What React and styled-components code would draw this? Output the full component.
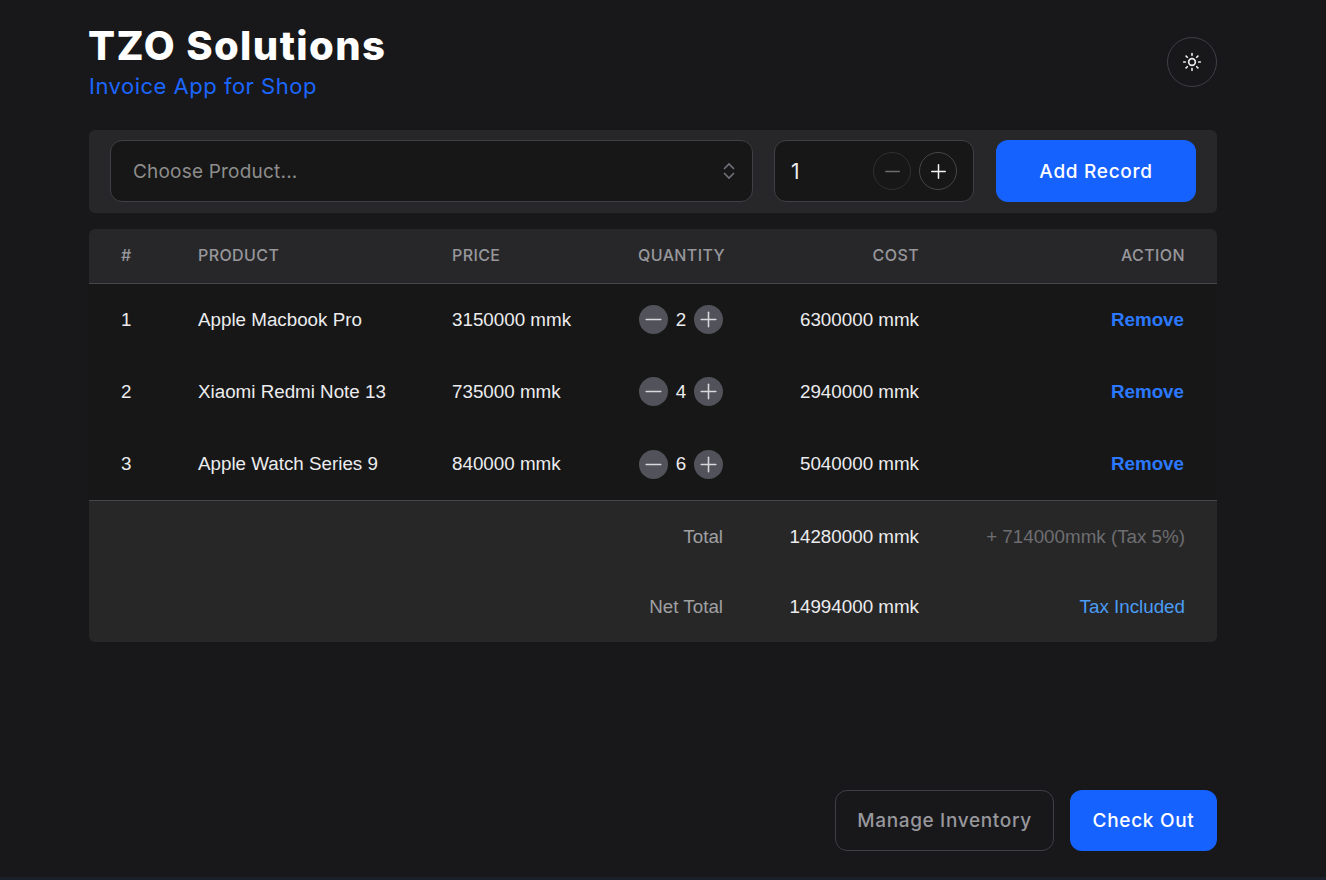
import React from "react";
import styled, { createGlobalStyle } from "styled-components";
import { Minus, Plus, Sun } from "lucide-react";

const GlobalStyle = createGlobalStyle`
  html {
    min-height: 100%;
    background: linear-gradient(to top, #1a212b 3px, #18181b 3px);
  }
  body {
    margin: 0;
    font-family: "Liberation Sans", Arial, sans-serif;
    color: #ececee;
  }
`;

const brandFont = `Inter, "Noto Sans", sans-serif`;

const Page = styled.div`
  width: 1128px;
  margin-left: 89px;
  padding-top: 24px;
`;

const Header = styled.header`
  display: flex;
  justify-content: space-between;
  align-items: center;
  height: 76px;
`;

const Title = styled.h1`
  margin: 0 0 0 -1px;
  font: 800 40px/44px ${brandFont};
  letter-spacing: 1.4px;
  color: #fff;
`;

const Subtitle = styled.p`
  margin: 4px 0 0;
  font: 400 22px/28px ${brandFont};
  letter-spacing: 0.5px;
  color: #1b66ff;
`;

const ThemeButton = styled.button`
  width: 50px;
  height: 50px;
  padding: 0;
  display: grid;
  place-items: center;
  border-radius: 50%;
  border: 1px solid #3f3f46;
  background: transparent;
  color: #ececee;
`;

const Toolbar = styled.section`
  margin-top: 30px;
  height: 83px;
  box-sizing: border-box;
  padding: 10px 21px;
  display: flex;
  gap: 21px;
  background: #27272a;
  border-radius: 6px;
`;

const Field = styled.div`
  box-sizing: border-box;
  height: 62px;
  display: flex;
  align-items: center;
  background: #171717;
  border: 1px solid #3f3f46;
  border-radius: 12px;
`;

const ProductSelect = styled(Field)`
  width: 643px;
  padding: 0 15px 0 22px;
  justify-content: space-between;
  font: 400 19px ${brandFont};
  letter-spacing: 0.2px;
  color: #8d8d8d;
`;

const QuantityField = styled(Field)`
  width: 200px;
  padding: 0 16px 0 16px;
  gap: 8px;
  font: 400 21px ${brandFont};
  color: #ececee;
`;

const QuantityValue = styled.span`
  flex: 1;
`;

const RoundButton = styled.button`
  width: 38px;
  height: 38px;
  padding: 0;
  display: grid;
  place-items: center;
  border-radius: 50%;
  background: transparent;
  border: 1px solid ${(p) => (p.$muted ? "#2f2f33" : "#46464c")};
  color: ${(p) => (p.$muted ? "#6c6c70" : "#f2f2f2")};
`;

const PrimaryButton = styled.button`
  box-sizing: border-box;
  height: ${(p) => p.$height || 62}px;
  width: ${(p) => p.$width}px;
  margin-left: ${(p) => (p.$push ? "auto" : "0")};
  border: none;
  border-radius: 12px;
  background: #1662ff;
  color: #fff;
  font: 500 19px ${brandFont};
  letter-spacing: 0.7px;
`;

const Table = styled.section`
  margin-top: 16px;
  border-radius: 6px;
  overflow: hidden;
  background: #171717;
`;

const Row = styled.div`
  display: grid;
  grid-template-columns: 77px 254px 186px 85px 196px 266px;
  align-items: center;
  padding: 0 32px;
  height: ${(p) => p.$height}px;
`;

const HeadRow = styled(Row)`
  background: #27272a;
  border-bottom: 1px solid #46464c;
  box-sizing: border-box;
  padding-bottom: 1px;
  font-family: ${brandFont};
  font-weight: 500;
  letter-spacing: 0.4px;
  color: #97979b;
`;

const Cell = styled.div`
  text-align: ${(p) => p.$align || "left"};
  font-size: ${(p) => (p.$head ? "16px" : "18.8px")};
  white-space: nowrap;
`;

const RemoveLink = styled.a`
  margin-right: 1px;
  font-weight: 700;
  color: #2b79ff;
`;

const Stepper = styled.div`
  display: flex;
  align-items: center;
  justify-content: space-between;
  padding-left: 1px;
`;

const StepButton = styled.button`
  width: 29px;
  height: 29px;
  padding: 0;
  display: grid;
  place-items: center;
  border: none;
  border-radius: 50%;
  background: #52525b;
  color: #d8d8da;
`;

const Footer = styled.div`
  background: #272727;
  border-top: 1px solid #46464c;
  padding-top: 1px;
`;

const Label = styled(Cell)`
  grid-column: 4;
  text-align: right;
  color: #a0a0a3;
`;

const Note = styled(Cell)`
  text-align: right;
  color: ${(p) => p.$color};
`;

const Actions = styled.div`
  margin-top: 147.7px;
  display: flex;
  justify-content: flex-end;
  gap: 16px;
`;

const OutlineButton = styled.button`
  box-sizing: border-box;
  width: 219px;
  height: 61px;
  background: transparent;
  border: 1px solid #3f3f46;
  border-radius: 12px;
  color: #97979b;
  font: 500 19px ${brandFont};
  letter-spacing: 0.65px;
`;

const SelectorIcon = () => (
  <svg width="16" height="18" viewBox="0 0 16 18" fill="none" stroke="#71717a" strokeWidth="1.6">
    <path d="M3 7 8 2l5 5M3 11l5 5 5-5" />
  </svg>
);

const records = [
  { id: 1, name: "Apple Macbook Pro", price: 3150000, qty: 2 },
  { id: 2, name: "Xiaomi Redmi Note 13", price: 735000, qty: 4 },
  { id: 3, name: "Apple Watch Series 9", price: 840000, qty: 6 },
];

export default function App() {
  return (
    <>
      <GlobalStyle />
      <Page>
        <Header>
          <div>
            <Title>TZO Solutions</Title>
            <Subtitle>Invoice App for Shop</Subtitle>
          </div>
          <ThemeButton>
            <Sun size={20} strokeWidth={2} />
          </ThemeButton>
        </Header>

        <Toolbar>
          <ProductSelect>
            Choose Product...
            <SelectorIcon />
          </ProductSelect>
          <QuantityField>
            <QuantityValue>1</QuantityValue>
            <RoundButton $muted>
              <Minus size={23} strokeWidth={1.6} />
            </RoundButton>
            <RoundButton>
              <Plus size={23} strokeWidth={1.6} />
            </RoundButton>
          </QuantityField>
          <PrimaryButton $width={200} $push>Add Record</PrimaryButton>
        </Toolbar>

        <Table>
          <HeadRow $height={54.7}>
            <Cell $head>#</Cell>
            <Cell $head>PRODUCT</Cell>
            <Cell $head>PRICE</Cell>
            <Cell $head>QUANTITY</Cell>
            <Cell $head $align="right">COST</Cell>
            <Cell $head $align="right">ACTION</Cell>
          </HeadRow>
          {records.map((r) => (
            <Row key={r.id} $height={72.2}>
              <Cell>{r.id}</Cell>
              <Cell>{r.name}</Cell>
              <Cell>{r.price} mmk</Cell>
              <Stepper>
                <StepButton>
                  <Minus size={25} strokeWidth={1.5} />
                </StepButton>
                <Cell>{r.qty}</Cell>
                <StepButton>
                  <Plus size={25} strokeWidth={1.5} />
                </StepButton>
              </Stepper>
              <Cell $align="right">{r.price * r.qty} mmk</Cell>
              <Cell $align="right">
                <RemoveLink>Remove</RemoveLink>
              </Cell>
            </Row>
          ))}
          <Footer>
            <Row $height={70}>
              <Label>Total</Label>
              <Cell $align="right">14280000 mmk</Cell>
              <Note $color="#6e6e72">+ 714000mmk (Tax 5%)</Note>
            </Row>
            <Row $height={70}>
              <Label>Net Total</Label>
              <Cell $align="right">14994000 mmk</Cell>
              <Note $color="#4a9cf5">Tax Included</Note>
            </Row>
          </Footer>
        </Table>

        <Actions>
          <OutlineButton>Manage Inventory</OutlineButton>
          <PrimaryButton $width={147} $height={61}>Check Out</PrimaryButton>
        </Actions>
      </Page>
    </>
  );
}
